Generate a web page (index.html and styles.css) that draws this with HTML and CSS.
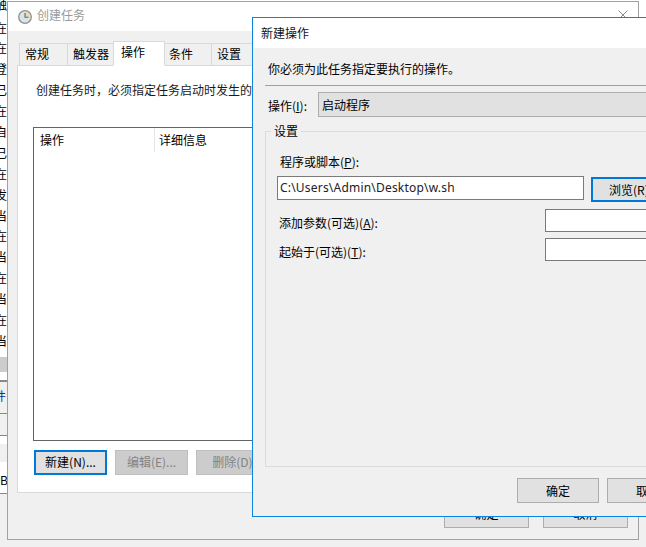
FILE: index.html
```html
<!DOCTYPE html>
<html lang="zh-CN">
<head>
<meta charset="utf-8">
<title>新建操作</title>
<link rel="stylesheet" href="styles.css">
</head>
<body>
<div class="strip">
  <div class="strip-row first">触</div>
  <div class="strip-row">在</div>
  <div class="strip-row">在</div>
  <div class="strip-row">登</div>
  <div class="strip-row">已</div>
  <div class="strip-row">在</div>
  <div class="strip-row">自</div>
  <div class="strip-row">已</div>
  <div class="strip-row">在</div>
  <div class="strip-row">发</div>
  <div class="strip-row">当</div>
  <div class="strip-row">在</div>
  <div class="strip-row">当</div>
  <div class="strip-row">在</div>
  <div class="strip-row">当</div>
  <div class="strip-row">在</div>
  <div class="strip-row">当</div>
  <div class="strip-sel"></div>
  <div class="strip-line"></div>
  <div class="strip-tab">件</div>
  <div class="strip-gap"></div>
  <div class="strip-white"></div>
  <div class="strip-grey"></div>
  <div class="strip-bs">BS</div>
</div>

<section class="window back">
  <header class="back-title">
    <svg class="clock" width="14" height="14" viewBox="0 0 14 14">
      <circle cx="7" cy="7" r="6.3" fill="#d9e3ea" stroke="#8f8f8f" stroke-width="1.3"/>
      <path d="M7 7V2.2A4.8 4.8 0 0 1 11.8 7Z" fill="#f3d9a0"/>
      <path d="M7 3V7.3H10.6" fill="none" stroke="#5f6a72" stroke-width="1.1"/>
    </svg>
    <span class="back-name">创建任务</span>
    <svg class="close" width="10" height="10" viewBox="0 0 10 10"><path d="M0.5 0.5L9.5 9.5M9.5 0.5L0.5 9.5" stroke="#8a8a8a" stroke-width="1" fill="none"/></svg>
  </header>
  <div class="back-body">
    <nav class="tabs">
      <span class="tab t1">常规</span>
      <span class="tab t2">触发器</span>
      <span class="tab active">操作</span>
      <span class="tab t4">条件</span>
      <span class="tab t5">设置</span>
    </nav>
    <div class="panel">
      <p class="intro">创建任务时，必须指定任务启动时发生的操作。</p>
      <div class="list">
        <div class="list-head">
          <span class="col col-a">操作</span>
          <span class="col col-b">详细信息</span>
        </div>
      </div>
      <div class="list-actions">
        <button class="btn focus w73">新建(N)...</button>
        <button class="btn off w73">编辑(E)...</button>
        <button class="btn off w73">删除(D)</button>
      </div>
    </div>
    <div class="back-foot">
      <button class="btn foot">确定</button>
      <button class="btn foot">取消</button>
    </div>
  </div>
</section>

<section class="window front">
  <header class="front-title">新建操作</header>
  <div class="front-body">
    <p class="must">你必须为此任务指定要执行的操作。</p>
    <div class="rule"></div>
    <div class="action-row">
      <label class="action-label">操作(<u>I</u>):</label>
      <div class="combo">启动程序</div>
    </div>
    <fieldset class="group">
      <legend class="legend">设置</legend>
      <label class="prog-label">程序或脚本(<u>P</u>):</label>
      <div class="prog-row">
        <div class="input prog">C:\Users\Admin\Desktop\w.sh</div>
        <button class="btn focus browse">浏览(R)...</button>
      </div>
      <div class="opt-row r1">
        <label class="opt-label">添加参数(可选)(<u>A</u>):</label>
        <div class="input opt"></div>
      </div>
      <div class="opt-row r2">
        <label class="opt-label">起始于(可选)(<u>T</u>):</label>
        <div class="input opt"></div>
      </div>
    </fieldset>
    <div class="front-foot">
      <button class="btn ok">确定</button>
      <button class="btn ok">取消</button>
    </div>
  </div>
</section>
</body>
</html>
```
FILE: styles.css
```css
* { box-sizing: border-box; }
html, body { margin: 0; height: 100%; overflow: hidden; }
body {
  width: 646px;
  height: 547px;
  position: relative;
  background: linear-gradient(#fff 17px, #f0f0f0 17px);
  font: 12px/16px "Noto Sans CJK SC", "Noto Sans", sans-serif;
  color: #000;
}
p { margin: 0; }
u { text-underline-offset: 1px; }

.strip { width: 8px; height: 547px; overflow: hidden; white-space: nowrap; }
.strip-row { height: 20.9px; line-height: 21px; margin-left: -5px; background: #fff; }
.strip-row.first { height: 16.5px; line-height: 10px; }
.strip-sel { height: 29px; border-top: 6px solid #fff; border-bottom: 8px solid #fff; background: #ccc; }
.strip-line { height: 2px; background: #888; }
.strip-tab { height: 31px; background: #f0f0f0; line-height: 27px; margin-left: -6px; color: #003399; }
.strip-gap { height: 23px; border-top: 1px solid #888; border-bottom: 1px solid #888; background: #f0f0f0; }
.strip-white { height: 8px; background: #fff; }
.strip-grey { height: 18px; background: #f0f0f0; }
.strip-bs { height: 32px; background: #fff; border-bottom: 1px solid #888; line-height: 36px; }

.window { position: absolute; overflow: hidden; }
.back { left: 7px; top: 1px; width: 632px; height: 539px; border: 1px solid #a0a0a0; background: #f0f0f0; display: flex; flex-direction: column; }
.back-title { height: 29px; background: #fff; display: flex; align-items: center; padding: 0 10px; flex: none; }
.clock { margin-right: 5px; flex: none; }
.back-name { color: #9b9b9b; flex: 1; font-size: 12px; padding-bottom: 4px; }
.close { margin-top: -3px; }
.back-body { padding: 11px 9px 0; flex: 1; }
.tabs { display: flex; align-items: flex-end; height: 23px; padding-left: 2px; }
.tab { height: 22px; padding-left: 5px; background: #f0f0f0; border: 1px solid #d9d9d9; border-bottom: 0; border-right: 0; line-height: 20px; }
.t1 { width: 48px; }
.t2 { width: 46px; }
.t4 { width: 46px; }
.t5 { width: 60px; }
.tab.active { width: 52px; height: 25px; background: #fff; border-right: 1px solid #d9d9d9; border-bottom: 1px solid #fff; margin-bottom: -1px; position: relative; z-index: 1; padding-left: 7px; line-height: 20px; }
.tab.active + .tab { border-left: 0; padding-left: 4px; }
.panel { height: 428px; background: #fff; border: 1px solid #d9d9d9; padding: 16px 15px 0; }
.intro { height: 45px; padding-left: 3px; line-height: 16px; white-space: nowrap; color: #1a1a1a; }
.list { height: 314px; width: 560px; border: 1px solid #646464; background: #fff; }
.list-head { display: flex; height: 24px; line-height: 24px; }
.col-a { width: 121px; padding-left: 6px; border-right: 1px solid #e5e5e5; }
.col-b { padding-left: 4px; }
.list-actions { display: flex; gap: 8px; margin-top: 9px; padding-left: 1px; }
.btn { font: inherit; color: #000; background: #e1e1e1; border: 1px solid #adadad; padding: 0; margin: 0; display: block; }
.w73 { width: 73px; height: 25px; padding-bottom: 2px; }
.btn.focus { border: 2px solid #0078d7; }
.btn.off { background: #ccc; border-color: #bfbfbf; color: #838383; }
.back-foot { display: flex; gap: 14px; justify-content: flex-end; margin-top: 10px; padding-right: 1px; }
.foot { width: 85px; height: 25px; padding-bottom: 3px; }

.front { left: 252px; top: 17px; width: 420px; height: 500px; border: 1px solid #0a84e0; background: #f0f0f0; display: flex; flex-direction: column; }
.front-title { height: 30px; background: #fff; padding-left: 8px; line-height: 29px; flex: none; color: #111; }
.front-body { padding: 13px 0 0 12px; flex: 1; }
.must { padding-left: 3px; height: 24px; }
.rule { height: 1px; background: #a0a0a0; }
.action-row { display: flex; align-items: center; margin-top: 6px; padding-left: 3px; height: 25px; }
.action-label { width: 50px; flex: none; padding-top: 2px; }
.combo { flex: 1; height: 25px; background: #e1e1e1; border: 1px solid #adadad; line-height: 23px; padding-left: 3px; }
.group { margin: 6px 0 0 0; padding: 0 0 0 12px; height: 344px; width: 500px; border: 1px solid #dcdcdc; }
.legend { padding: 0 3px; margin-left: -7px; line-height: 16px; }
.prog-label { display: block; margin-top: 15px; padding-left: 2px; }
.prog-row { display: flex; margin-top: 6px; gap: 7px; margin-left: -1px; }
.input { background: #fff; border: 1px solid #7a7a7a; }
.prog { width: 307px; height: 24px; line-height: 21px; padding-left: 2px; flex: none; color: #222; font-family: "Noto Sans", sans-serif; letter-spacing: 0.2px; }
.browse { width: 80px; height: 25px; flex: none; margin-top: 1px; text-align: left; padding-left: 16px; }
.opt-row { display: flex; align-items: center; padding-left: 1px; }
.r1 { margin-top: 7px; }
.r2 { margin-top: 6px; }
.opt-label { width: 266px; flex: none; padding-top: 4px; }
.opt { width: 200px; height: 23px; }
.front-foot { display: flex; gap: 8px; margin-top: 11px; padding-left: 252px; }
.ok { width: 82px; height: 25px; flex: none; }
```
